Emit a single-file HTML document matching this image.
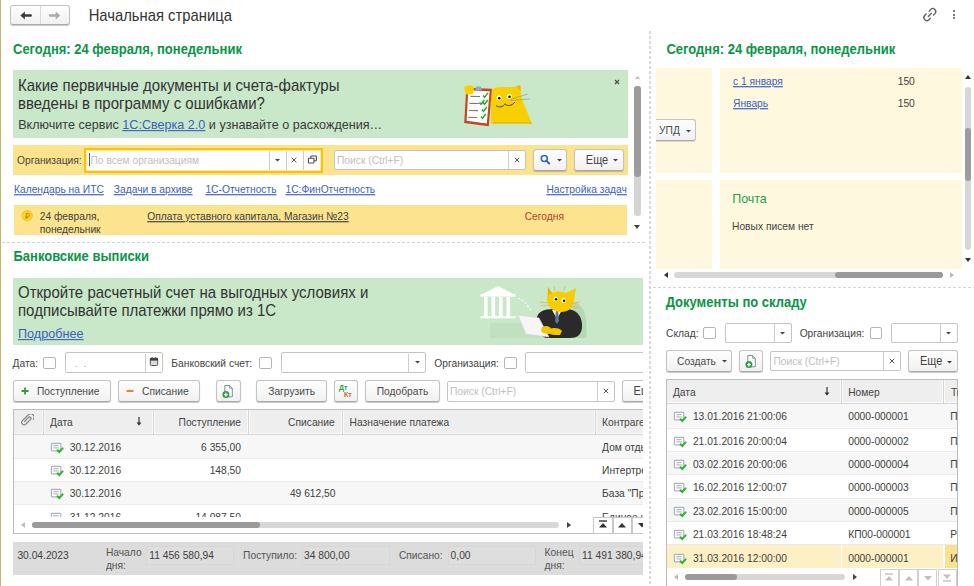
<!DOCTYPE html>
<html><head><meta charset="utf-8"><style>
html,body{margin:0;padding:0;}
body{width:974px;height:586px;overflow:hidden;position:relative;background:#fff;font-family:"Liberation Sans",sans-serif;}
.t{position:absolute;white-space:nowrap;}
.b{position:absolute;box-sizing:border-box;}
.clip{position:absolute;overflow:hidden;}
</style></head><body>
<div class="b" style="left:0.00px;top:0.00px;width:1.30px;height:586.00px;background:#c2b46a;"></div>
<div class="b" style="left:10.10px;top:4.90px;width:60.20px;height:20.60px;border:1px solid #c3c3c3;border-bottom-color:#a9a9a9;border-radius:3px;background:linear-gradient(#fefefe,#f1f1f1);box-shadow:0 1px 1px rgba(0,0,0,0.22);"></div>
<div class="b" style="left:39.90px;top:6.40px;width:1.00px;height:17.60px;background:#d9d9d9;"></div>
<svg style="position:absolute;left:0;top:0" width="70" height="30"><path d="M20.4 15.5L24.9 11.5V19.5Z" fill="#3a3a3a"/><path d="M24.5 15.5H30.6" stroke="#3a3a3a" stroke-width="2.5" stroke-linecap="round"/><path d="M60.2 15.5L55.7 11.5V19.5Z" fill="#ababab"/><path d="M56.1 15.5H50" stroke="#ababab" stroke-width="2.5" stroke-linecap="round"/></svg>
<div class="t " style="left:88.70px;top:8px;font-size:14.8px;line-height:16px;color:#333;font-weight:normal;transform:scaleY(1.08);transform-origin:0 13px;">Начальная страница</div>
<svg style="position:absolute;left:920px;top:5px" width="20" height="20"><g fill="none" stroke="#5e5e5e" stroke-width="1.35" stroke-linecap="round"><path d="M9.2 6.34L10.68 4.38A3 3 0 0 1 14.92 8.62L13.5 10.04"/><path d="M6.09 9.07L4.68 10.48A3 3 0 0 0 8.92 14.72L10.33 13.31"/><path d="M8.3 11.5L11.5 8.3"/></g></svg>
<div class="b" style="left:953.10px;top:10.35px;width:2.10px;height:2.10px;background:#505050;border-radius:50%;"></div>
<div class="b" style="left:953.10px;top:13.75px;width:2.10px;height:2.10px;background:#505050;border-radius:50%;"></div>
<div class="b" style="left:953.10px;top:17.15px;width:2.10px;height:2.10px;background:#505050;border-radius:50%;"></div>
<div class="t " style="left:13.00px;top:42px;font-size:13px;line-height:15px;color:#0b9446;font-weight:bold;transform:scaleY(1.08);transform-origin:0 12px;">Сегодня: 24 февраля, понедельник</div>
<div class="b" style="left:13.00px;top:70.00px;width:615.00px;height:68.00px;background:#c9e7c9;"></div>
<div class="t " style="left:18.00px;top:77px;font-size:15px;line-height:17px;color:#333;font-weight:normal;transform:scaleY(1.08);transform-origin:0 14px;">Какие первичные документы и счета-фактуры</div>
<div class="t " style="left:18.00px;top:95px;font-size:15px;line-height:17px;color:#333;font-weight:normal;transform:scaleY(1.08);transform-origin:0 14px;">введены в программу с ошибками?</div>
<div class="t " style="left:18.20px;top:118px;font-size:12.6px;line-height:14px;color:#3a3a3a;font-weight:normal;transform:scaleY(1.08);transform-origin:0 11px;">Включите сервис <span style="color:#3a5fbf;text-decoration:underline">1С:Сверка 2.0</span> и узнавайте о расхождения…</div>
<svg style="position:absolute;left:612.00px;top:77.00px" width="10" height="10"><path d="M3.0 3.0L7.0 7.0M7.0 3.0L3.0 7.0" stroke="#505050" stroke-width="1.3"/></svg>
<svg style="position:absolute;left:455px;top:75px" width="80" height="55" viewBox="0 0 80 55">
<path d="M36 48.6V17C37 13 41 12 48 12C55 12 60 12.5 61.5 11L65.5 10.6L65.7 17C66 22 68 27 71 34L76.8 48.6Z" fill="#f8d000"/>
<path d="M61.5 11L65.5 10.6L65.6 16.5Z" fill="#f0b400"/>
<path d="M76.8 48.6H38V47.5H76.3Z" fill="#e8a800"/>
<circle cx="44" cy="23" r="2.4" fill="#fff"/><circle cx="44.2" cy="23.2" r="1.3" fill="#111"/>
<circle cx="54.3" cy="21.5" r="2.4" fill="#fff"/><circle cx="54.5" cy="21.7" r="1.3" fill="#111"/>
<path d="M41 30.5C44 33 48 32 50.2 29C52 31.5 57 31 60 27" stroke="#333" stroke-width="0.9" fill="none"/>
<path d="M49.3 28.2L51 28.4L50.2 29.6Z" fill="#d04040"/>
<path d="M55 24.6L72.7 19M55.5 25.5L74.7 24" stroke="#8a8a8a" stroke-width="0.55"/>
<path d="M11.3 12.8L36.9 13.8L33.8 51.2L9.2 48.1Z" fill="#c4461f"/>
<path d="M13.3 15.3L34.6 16.2L31.8 48.5L11.6 45.8Z" fill="#fff"/>
<path d="M9 13C10 10 14 10 17 10.5L19 13L18 19L11 19.5Z" fill="#f8d000"/>
<path d="M21 11.5H26L26.5 15H20.5Z" fill="#8fa9d6"/>
<path d="M15.5 21.3L25 21.5M14.5 28.3L24.5 28.5M14 35.5L23 35.7M13.3 42.3L22 42.5" stroke="#7c7c7c" stroke-width="1.2"/>
<path d="M28 20.5L29.6 22.3L33 17.8M24.5 27.5L26 29.3L29.2 25M28 27.5L29.5 29.3L32.8 25M27 34.5L28.5 36.3L31.8 32M26 41.5L27.5 43.3L30.8 39" stroke="#2aa632" stroke-width="1.4" fill="none"/>
</svg>
<svg style="position:absolute;left:635px;top:75.5px" width="5" height="3"><path d="M0 3H5L2.5 0Z" fill="#bdbdbd"/></svg>
<div class="b" style="left:634.30px;top:86.40px;width:6.60px;height:129.90px;background:#d4d4d4;border-radius:3.3px;"></div>
<div class="b" style="left:634.30px;top:86.40px;width:6.60px;height:90.20px;background:#9c9c9c;border-radius:3.3px;"></div>
<svg style="position:absolute;left:634px;top:225px" width="6" height="4"><path d="M0 0H6L3 4Z" fill="#444"/></svg>
<div class="b" style="left:13.00px;top:145.40px;width:615.00px;height:29.40px;background:#fce48f;"></div>
<div class="t " style="left:17.00px;top:155px;font-size:10.25px;line-height:11px;color:#444;font-weight:normal;transform:scaleY(1.15);transform-origin:0 9px;">Организация:</div>
<div class="b" style="left:83.50px;top:147.50px;width:239.50px;height:25.50px;border:2.2px solid #f8c505;box-shadow:inset 0 0 0 1px #fde8a0;background:#fff;"></div>
<div class="b" style="left:88.60px;top:153.20px;width:1.80px;height:13.00px;background:#555;"></div>
<div class="t " style="left:90.50px;top:155px;font-size:10.25px;line-height:11px;color:#c0c0c0;font-weight:normal;transform:scaleY(1.15);transform-origin:0 9px;">По всем организациям</div>
<div class="b" style="left:268.80px;top:150.50px;width:1.00px;height:19.50px;background:#cdcdcd;"></div>
<div class="b" style="left:285.70px;top:150.50px;width:1.00px;height:19.50px;background:#cdcdcd;"></div>
<div class="b" style="left:302.60px;top:150.50px;width:1.00px;height:19.50px;background:#cdcdcd;"></div>
<svg style="position:absolute;left:275.00px;top:159.20px" width="5" height="3"><path d="M0 0H5L2.5 2.6Z" fill="#444"/></svg>
<svg style="position:absolute;left:289.20px;top:155.30px" width="10" height="10"><path d="M2.6 2.6L7.4 7.4M7.4 2.6L2.6 7.4" stroke="#555" stroke-width="1.0"/></svg>
<svg style="position:absolute;left:307px;top:155px" width="11" height="9" viewBox="0 0 11 9"><g fill="#fff" stroke="#4a4a4a" stroke-width="1.1"><rect x="3.8" y="1" width="5.6" height="4.8" rx="0.8"/><rect x="1.4" y="3.2" width="5.6" height="4.8" rx="0.8"/></g></svg>
<div class="b" style="left:334.00px;top:150.00px;width:191.60px;height:20.10px;border:1px solid #c4c4c4;border-radius:2px;background:#fff;"></div>
<div class="b" style="left:508.30px;top:151.00px;width:1.00px;height:18.20px;background:#d0d0d0;"></div>
<div class="t " style="left:337.00px;top:155px;font-size:10.25px;line-height:11px;color:#c0c0c0;font-weight:normal;transform:scaleY(1.15);transform-origin:0 9px;">Поиск (Ctrl+F)</div>
<svg style="position:absolute;left:512.00px;top:155.20px" width="10" height="10"><path d="M2.8 2.8L7.2 7.2M7.2 2.8L2.8 7.2" stroke="#555" stroke-width="1.0"/></svg>
<div class="b" style="left:533.10px;top:149.10px;width:34.40px;height:21.80px;border:1px solid #c3c3c3;border-bottom-color:#a9a9a9;border-radius:3px;background:linear-gradient(#fefefe,#f1f1f1);box-shadow:0 1px 1px rgba(0,0,0,0.22);"></div>
<svg style="position:absolute;left:538px;top:152px" width="14" height="14" viewBox="0 0 14 14"><circle cx="6.3" cy="6.4" r="3" fill="none" stroke="#2c64b6" stroke-width="1.5"/><path d="M8.4 8.6L11.3 11.6" stroke="#2c64b6" stroke-width="1.9" stroke-linecap="round"/></svg>
<svg style="position:absolute;left:557.00px;top:159.40px" width="5" height="3"><path d="M0 0H5L2.5 2.6Z" fill="#444"/></svg>
<div class="b" style="left:574.20px;top:149.10px;width:50.00px;height:21.80px;border:1px solid #c3c3c3;border-bottom-color:#a9a9a9;border-radius:3px;background:linear-gradient(#fefefe,#f1f1f1);box-shadow:0 1px 1px rgba(0,0,0,0.22);"></div>
<div class="t " style="left:585.80px;top:154px;font-size:11px;line-height:12px;color:#444;font-weight:normal;transform:scaleY(1.15);transform-origin:0 10px;">Еще</div>
<svg style="position:absolute;left:613.10px;top:159.40px" width="5" height="3"><path d="M0 0H5L2.5 2.6Z" fill="#444"/></svg>
<div class="t " style="left:14.00px;top:184px;font-size:10.25px;line-height:11px;color:#3a5fbf;font-weight:normal;transform:scaleY(1.15);transform-origin:0 9px;text-decoration:underline;">Календарь на ИТС</div>
<div class="t " style="left:113.80px;top:184px;font-size:10.25px;line-height:11px;color:#3a5fbf;font-weight:normal;transform:scaleY(1.15);transform-origin:0 9px;text-decoration:underline;">Задачи в архиве</div>
<div class="t " style="left:205.40px;top:184px;font-size:10.25px;line-height:11px;color:#3a5fbf;font-weight:normal;transform:scaleY(1.15);transform-origin:0 9px;text-decoration:underline;">1С-Отчетность</div>
<div class="t " style="left:285.50px;top:184px;font-size:10.25px;line-height:11px;color:#3a5fbf;font-weight:normal;transform:scaleY(1.15);transform-origin:0 9px;text-decoration:underline;">1С:ФинОтчетность</div>
<div class="t " style="right:347.10px;top:184px;font-size:10.25px;line-height:11px;color:#3a5fbf;font-weight:normal;transform:scaleY(1.15);transform-origin:0 9px;text-decoration:underline;">Настройка задач</div>
<div class="b" style="left:13.60px;top:205.00px;width:613.40px;height:30.40px;background:#fce48f;"></div>
<svg style="position:absolute;left:20.5px;top:210.2px" width="12" height="12" viewBox="0 0 12 12"><circle cx="6.1" cy="5.7" r="5.1" fill="#f9d72a" stroke="#ebb400" stroke-width="1" stroke-dasharray="1.2 0.8"/><path d="M5.3 2.9V8.9M5.3 3.2H7A1.55 1.55 0 0 1 7 6.3H4.1M4.1 7.6H7.3" stroke="#cf9500" stroke-width="1.05" fill="none"/></svg>
<div class="t " style="left:39.70px;top:211px;font-size:10.25px;line-height:11px;color:#404040;font-weight:normal;transform:scaleY(1.15);transform-origin:0 9px;">24 февраля,</div>
<div class="t " style="left:39.70px;top:224px;font-size:10.25px;line-height:11px;color:#404040;font-weight:normal;transform:scaleY(1.15);transform-origin:0 9px;">понедельник</div>
<div class="t " style="left:147.20px;top:211px;font-size:10.25px;line-height:11px;color:#404040;font-weight:normal;transform:scaleY(1.15);transform-origin:0 9px;text-decoration:underline;">Оплата уставного капитала, Магазин №23</div>
<div class="t " style="left:524.70px;top:211px;font-size:10.25px;line-height:11px;color:#b8402a;font-weight:normal;transform:scaleY(1.15);transform-origin:0 9px;">Сегодня</div>
<div class="b" style="left:2.00px;top:241.80px;width:644.00px;height:1.00px;background:repeating-linear-gradient(90deg,#d4d4d4 0 3px,transparent 3px 5px);"></div>
<div class="b" style="left:649.00px;top:30.70px;width:2.00px;height:555.30px;background:repeating-linear-gradient(180deg,#d8d8d8 0 3px,transparent 3px 5px);"></div>
<div class="b" style="left:653.00px;top:287.20px;width:321.00px;height:1.00px;background:repeating-linear-gradient(90deg,#d4d4d4 0 3px,transparent 3px 5px);"></div>
<div class="clip" style="left:0;top:243px;width:643.2px;height:343px;"><div style="position:absolute;left:0;top:-243px;width:974px;height:586px;">
<div class="t " style="left:13.50px;top:249px;font-size:13px;line-height:15px;color:#0b9446;font-weight:bold;transform:scaleY(1.08);transform-origin:0 12px;">Банковские выписки</div>
<div class="b" style="left:13.00px;top:278.00px;width:687.00px;height:67.10px;background:#c9e7c9;"></div>
<div class="t " style="left:18.00px;top:284px;font-size:15px;line-height:17px;color:#333;font-weight:normal;transform:scaleY(1.08);transform-origin:0 14px;">Откройте расчетный счет на выгодных условиях и</div>
<div class="t " style="left:18.00px;top:302px;font-size:15px;line-height:17px;color:#333;font-weight:normal;transform:scaleY(1.08);transform-origin:0 14px;">подписывайте платежки прямо из 1С</div>
<div class="t " style="left:18.00px;top:327px;font-size:12.65px;line-height:14px;color:#3a5fbf;font-weight:normal;transform:scaleY(1.08);transform-origin:0 11px;text-decoration:underline;">Подробнее</div>
<svg style="position:absolute;left:470px;top:278px" width="130" height="67" viewBox="0 0 130 67">
<path d="M20 45H82V60H20Z" fill="#b9dab7" opacity="0.5"/>
<path d="M104 24C114 26 118 40 116 60H96Z" fill="#b5d8b3"/>
<path d="M11 17L28 8L45 17Z" fill="#fff"/><rect x="10.5" y="16" width="35" height="2.6" fill="#fff"/>
<rect x="14" y="19" width="3.6" height="19" fill="#fff"/><rect x="21.5" y="19" width="3.6" height="19" fill="#fff"/><rect x="29" y="19" width="3.6" height="19" fill="#fff"/><rect x="36.5" y="19" width="3.6" height="19" fill="#fff"/>
<rect x="10.5" y="38" width="35" height="2.4" fill="#fff"/>
<path d="M48 20Q56 23 61 33" stroke="#fff" stroke-width="1.1" stroke-dasharray="2 2" fill="none"/>
<path d="M67 42C66 34 74 31 84 31H98C108 32 113 40 112 50C111 57 107 60 100 60H78C70 60 68 52 67 42Z" fill="#2a2a2a"/>
<path d="M82 32L87 41L92 32Z" fill="#eeeeee"/><path d="M86 33H88L89 43L87 46L85 43Z" fill="#5b7896"/>
<path d="M78 9L82 15C86 13 92 13 96 15L106 10L104 22C104 30 98 34 91 34C83 34 78 29 77 22Z" fill="#f8cd00"/>
<path d="M78 9L82 15L78 17Z" fill="#e9b400"/>
<circle cx="85.5" cy="21" r="2.2" fill="#fff"/><circle cx="86" cy="21.2" r="1.2" fill="#111"/>
<circle cx="93.5" cy="22.5" r="2.2" fill="#fff"/><circle cx="94" cy="22.7" r="1.2" fill="#111"/>
<path d="M70 24L80 25M71 28L80 27M100 26L110 24M100 28L109 30M84 8L85 13M95 8L94 13" stroke="#e2b040" stroke-width="0.7"/>
<path d="M48 37L69 40L79 59L56 56Z" fill="#f6f6f6" stroke="#d8d8d8" stroke-width="0.6"/>
<path d="M72 49C76 47 80 48 81 51L79 56C75 56 72 55 71 53Z" fill="#f5c400"/>
<path d="M79 51C84 49 90 50 92 53L90 57C85 57 80 57 79 55Z" fill="#f5c400"/>
</svg>
<div class="t " style="left:12.60px;top:358px;font-size:10.25px;line-height:11px;color:#444;font-weight:normal;transform:scaleY(1.15);transform-origin:0 9px;">Дата:</div>
<div class="b" style="left:43.10px;top:356.70px;width:12.90px;height:12.40px;border:1px solid #b5b5b5;border-radius:2px;background:#fff;"></div>
<div class="b" style="left:64.50px;top:352.40px;width:98.30px;height:20.50px;border:1px solid #c4c4c4;border-radius:2px;background:#fff;"></div>
<div class="b" style="left:144.90px;top:353.50px;width:1.00px;height:18.50px;background:#cccccc;"></div>
<div class="t " style="left:75.00px;top:358px;font-size:10.25px;line-height:11px;color:#d9a65a;font-weight:normal;transform:scaleY(1.15);transform-origin:0 9px;">. &nbsp;.</div>
<svg style="position:absolute;left:149px;top:356px" width="10" height="11" viewBox="0 0 10 11"><rect x="1.3" y="2.3" width="7.4" height="7.2" rx="1" fill="#dcdcdc" stroke="#555" stroke-width="1"/><rect x="1" y="2" width="8" height="2.6" fill="#3f3f4a"/><path d="M3.2 1V3M6.8 1V3" stroke="#555" stroke-width="1"/></svg>
<div class="t " style="left:171.30px;top:358px;font-size:10.25px;line-height:11px;color:#444;font-weight:normal;transform:scaleY(1.15);transform-origin:0 9px;">Банковский счет:</div>
<div class="b" style="left:259.30px;top:356.70px;width:12.90px;height:12.40px;border:1px solid #b5b5b5;border-radius:2px;background:#fff;"></div>
<div class="b" style="left:280.80px;top:352.40px;width:144.90px;height:20.50px;border:1px solid #c4c4c4;border-radius:2px;background:#fff;"></div>
<div class="b" style="left:408.20px;top:353.50px;width:1.00px;height:18.50px;background:#cccccc;"></div>
<svg style="position:absolute;left:414.50px;top:361.20px" width="5" height="3"><path d="M0 0H5L2.5 2.6Z" fill="#444"/></svg>
<div class="t " style="left:434.30px;top:358px;font-size:10.25px;line-height:11px;color:#444;font-weight:normal;transform:scaleY(1.15);transform-origin:0 9px;">Организация:</div>
<div class="b" style="left:503.60px;top:356.70px;width:13.20px;height:12.40px;border:1px solid #b5b5b5;border-radius:2px;background:#fff;"></div>
<div class="b" style="left:524.90px;top:352.40px;width:175.60px;height:20.50px;border:1px solid #c4c4c4;border-radius:2px;background:#fff;"></div>
<div class="b" style="left:12.90px;top:379.90px;width:97.90px;height:21.80px;border:1px solid #c3c3c3;border-bottom-color:#a9a9a9;border-radius:3px;background:linear-gradient(#fefefe,#f1f1f1);box-shadow:0 1px 1px rgba(0,0,0,0.22);"></div>
<svg style="position:absolute;left:20px;top:386px" width="10" height="10"><path d="M5 1.5V8.5M1.5 5H8.5" stroke="#2f9e3f" stroke-width="1.8"/></svg>
<div class="t " style="left:37.00px;top:386px;font-size:10.25px;line-height:11px;color:#4a4a4a;font-weight:normal;transform:scaleY(1.15);transform-origin:0 9px;">Поступление</div>
<div class="b" style="left:117.80px;top:379.90px;width:82.30px;height:21.80px;border:1px solid #c3c3c3;border-bottom-color:#a9a9a9;border-radius:3px;background:linear-gradient(#fefefe,#f1f1f1);box-shadow:0 1px 1px rgba(0,0,0,0.22);"></div>
<svg style="position:absolute;left:125px;top:386px" width="10" height="10"><path d="M1.5 5H8.5" stroke="#e6772e" stroke-width="1.8"/></svg>
<div class="t " style="left:142.00px;top:386px;font-size:10.25px;line-height:11px;color:#4a4a4a;font-weight:normal;transform:scaleY(1.15);transform-origin:0 9px;">Списание</div>
<div class="b" style="left:215.70px;top:379.90px;width:25.10px;height:21.80px;border:1px solid #c3c3c3;border-bottom-color:#a9a9a9;border-radius:3px;background:linear-gradient(#fefefe,#f1f1f1);box-shadow:0 1px 1px rgba(0,0,0,0.22);"></div>
<svg style="position:absolute;left:221.30px;top:382.80px" width="14" height="16" viewBox="0 0 14 16"><path d="M3.8 2.5H8.6L11.3 5.2V13.8H3.8Z" fill="#fff" stroke="#7f8fa8" stroke-width="1"/><path d="M8.6 2.5V5.2H11.3" fill="none" stroke="#7f8fa8" stroke-width="0.9"/><circle cx="4.9" cy="11.6" r="3.5" fill="#2f9e3f"/><path d="M4.9 9.7V13.5M3 11.6H6.8" stroke="#fff" stroke-width="1.3"/></svg>
<div class="b" style="left:256.40px;top:379.90px;width:70.40px;height:21.80px;border:1px solid #c3c3c3;border-bottom-color:#a9a9a9;border-radius:3px;background:linear-gradient(#fefefe,#f1f1f1);box-shadow:0 1px 1px rgba(0,0,0,0.22);"></div>
<div class="t " style="left:268.20px;top:386px;font-size:10.25px;line-height:11px;color:#4a4a4a;font-weight:normal;transform:scaleY(1.15);transform-origin:0 9px;">Загрузить</div>
<div class="b" style="left:333.80px;top:379.90px;width:24.20px;height:21.80px;border:1px solid #c3c3c3;border-bottom-color:#a9a9a9;border-radius:3px;background:linear-gradient(#fefefe,#f1f1f1);box-shadow:0 1px 1px rgba(0,0,0,0.22);"></div>
<svg style="position:absolute;left:338px;top:383px" width="16" height="16" viewBox="0 0 16 16"><text x="1" y="7" font-family="Liberation Sans" font-size="7" font-weight="bold" fill="#2f9e3f">Дт</text><text x="6" y="14" font-family="Liberation Sans" font-size="7" font-weight="bold" fill="#d9602a">Кт</text></svg>
<div class="b" style="left:365.20px;top:379.90px;width:74.80px;height:21.80px;border:1px solid #c3c3c3;border-bottom-color:#a9a9a9;border-radius:3px;background:linear-gradient(#fefefe,#f1f1f1);box-shadow:0 1px 1px rgba(0,0,0,0.22);"></div>
<div class="t " style="left:376.70px;top:386px;font-size:10.25px;line-height:11px;color:#4a4a4a;font-weight:normal;transform:scaleY(1.15);transform-origin:0 9px;">Подобрать</div>
<div class="b" style="left:446.90px;top:380.50px;width:168.00px;height:21.00px;border:1px solid #c4c4c4;border-radius:2px;background:#fff;"></div>
<div class="b" style="left:596.90px;top:381.50px;width:1.00px;height:19.00px;background:#cccccc;"></div>
<div class="t " style="left:450.00px;top:386px;font-size:10.25px;line-height:11px;color:#c0c0c0;font-weight:normal;transform:scaleY(1.15);transform-origin:0 9px;">Поиск (Ctrl+F)</div>
<svg style="position:absolute;left:600.80px;top:385.80px" width="10" height="10"><path d="M2.8 2.8L7.2 7.2M7.2 2.8L2.8 7.2" stroke="#555" stroke-width="1.0"/></svg>
<div class="b" style="left:621.70px;top:379.90px;width:58.80px;height:21.80px;border:1px solid #c3c3c3;border-bottom-color:#a9a9a9;border-radius:3px;background:linear-gradient(#fefefe,#f1f1f1);box-shadow:0 1px 1px rgba(0,0,0,0.22);"></div>
<div class="t " style="left:633.60px;top:385px;font-size:11px;line-height:12px;color:#444;font-weight:normal;transform:scaleY(1.15);transform-origin:0 10px;">Еще</div>
<div class="b" style="left:13.00px;top:409.00px;width:687.00px;height:125.00px;border:1px solid #bdbdbd;background:#fff;"></div>
<div class="b" style="left:14.00px;top:410.00px;width:686.00px;height:23.60px;background:#eeeeee;"></div>
<div class="b" style="left:14.00px;top:432.60px;width:686.00px;height:1.00px;background:#fafafa;"></div>
<div class="b" style="left:14.00px;top:433.60px;width:686.00px;height:1.00px;background:#d6d6d6;"></div>
<div class="b" style="left:41.70px;top:410.00px;width:1.00px;height:23.00px;background:#fafafa;"></div>
<div class="b" style="left:42.70px;top:410.00px;width:1.00px;height:23.60px;background:#d4d4d4;"></div>
<div class="b" style="left:43.70px;top:410.00px;width:1.00px;height:23.00px;background:#fafafa;"></div>
<div class="b" style="left:151.90px;top:410.00px;width:1.00px;height:23.00px;background:#fafafa;"></div>
<div class="b" style="left:152.90px;top:410.00px;width:1.00px;height:23.60px;background:#d4d4d4;"></div>
<div class="b" style="left:153.90px;top:410.00px;width:1.00px;height:23.00px;background:#fafafa;"></div>
<div class="b" style="left:246.90px;top:410.00px;width:1.00px;height:23.00px;background:#fafafa;"></div>
<div class="b" style="left:247.90px;top:410.00px;width:1.00px;height:23.60px;background:#d4d4d4;"></div>
<div class="b" style="left:248.90px;top:410.00px;width:1.00px;height:23.00px;background:#fafafa;"></div>
<div class="b" style="left:340.70px;top:410.00px;width:1.00px;height:23.00px;background:#fafafa;"></div>
<div class="b" style="left:341.70px;top:410.00px;width:1.00px;height:23.60px;background:#d4d4d4;"></div>
<div class="b" style="left:342.70px;top:410.00px;width:1.00px;height:23.00px;background:#fafafa;"></div>
<div class="b" style="left:593.70px;top:410.00px;width:1.00px;height:23.00px;background:#fafafa;"></div>
<div class="b" style="left:594.70px;top:410.00px;width:1.00px;height:23.60px;background:#d4d4d4;"></div>
<div class="b" style="left:595.70px;top:410.00px;width:1.00px;height:23.00px;background:#fafafa;"></div>
<svg style="position:absolute;left:20px;top:414px" width="14" height="14" viewBox="0 0 14 14"><g transform="rotate(45 7 7)" fill="none" stroke="#7a7a7a" stroke-width="1.1"><path d="M5.6 9.5V3.3A1.4 1.4 0 0 1 8.4 3.3V10A2.4 2.4 0 0 1 3.6 10V1.8A3.4 3.4 0 0 1 10.4 1.8"/></g></svg>
<div class="t " style="left:50.00px;top:417px;font-size:10.25px;line-height:11px;color:#444;font-weight:normal;transform:scaleY(1.15);transform-origin:0 9px;">Дата</div>
<svg style="position:absolute;left:136px;top:417px" width="6" height="9"><path d="M3 0V7.5" stroke="#333" stroke-width="1.2"/><path d="M0.5 5.5L3 8.5L5.5 5.5Z" fill="#333"/></svg>
<div class="t " style="right:733.00px;top:417px;font-size:10.25px;line-height:11px;color:#444;font-weight:normal;transform:scaleY(1.15);transform-origin:0 9px;">Поступление</div>
<div class="t " style="right:639.30px;top:417px;font-size:10.25px;line-height:11px;color:#444;font-weight:normal;transform:scaleY(1.15);transform-origin:0 9px;">Списание</div>
<div class="t " style="left:349.60px;top:417px;font-size:10.25px;line-height:11px;color:#444;font-weight:normal;transform:scaleY(1.15);transform-origin:0 9px;">Назначение платежа</div>
<div class="t " style="left:602.10px;top:417px;font-size:10.25px;line-height:11px;color:#444;font-weight:normal;transform:scaleY(1.15);transform-origin:0 9px;">Контрагент</div>
<div class="clip" style="left:14px;top:434.6px;width:690px;height:82.4px;"><div style="position:absolute;left:-14px;top:-434.6px;width:974px;height:586px;">
<div class="b" style="left:14.00px;top:434.60px;width:686.00px;height:23.10px;background:#f7f7f7;"></div>
<div class="b" style="left:14.00px;top:457.70px;width:686.00px;height:1.00px;background:#ebebeb;"></div>
<svg style="position:absolute;left:49.70px;top:440.60px" width="14" height="13" viewBox="0 0 14 13"><rect x="1.4" y="2.4" width="9.4" height="7.4" rx="0.8" fill="#fff" stroke="#aab3be" stroke-width="1.2"/><path d="M3.3 4.6H8.7M3.3 6.9H8.7" stroke="#b8bcc2" stroke-width="1.1"/><path d="M7.6 9.2L9.3 11L12.6 7.4" stroke="#2db52f" stroke-width="2" fill="none" stroke-linecap="round"/></svg>
<div class="t " style="left:69.80px;top:442px;font-size:10.25px;line-height:11px;color:#404040;font-weight:normal;transform:scaleY(1.15);transform-origin:0 9px;">30.12.2016</div>
<div class="t " style="right:733.00px;top:442px;font-size:10.25px;line-height:11px;color:#404040;font-weight:normal;transform:scaleY(1.15);transform-origin:0 9px;">6 355,00</div>
<div class="t " style="left:602.10px;top:442px;font-size:10.25px;line-height:11px;color:#404040;font-weight:normal;transform:scaleY(1.15);transform-origin:0 9px;">Дом отдыха</div>
<div class="b" style="left:14.00px;top:458.70px;width:686.00px;height:21.90px;background:#ffffff;"></div>
<div class="b" style="left:14.00px;top:480.60px;width:686.00px;height:1.00px;background:#ebebeb;"></div>
<svg style="position:absolute;left:49.70px;top:463.90px" width="14" height="13" viewBox="0 0 14 13"><rect x="1.4" y="2.4" width="9.4" height="7.4" rx="0.8" fill="#fff" stroke="#aab3be" stroke-width="1.2"/><path d="M3.3 4.6H8.7M3.3 6.9H8.7" stroke="#b8bcc2" stroke-width="1.1"/><path d="M7.6 9.2L9.3 11L12.6 7.4" stroke="#2db52f" stroke-width="2" fill="none" stroke-linecap="round"/></svg>
<div class="t " style="left:69.80px;top:465px;font-size:10.25px;line-height:11px;color:#404040;font-weight:normal;transform:scaleY(1.15);transform-origin:0 9px;">30.12.2016</div>
<div class="t " style="right:733.00px;top:465px;font-size:10.25px;line-height:11px;color:#404040;font-weight:normal;transform:scaleY(1.15);transform-origin:0 9px;">148,50</div>
<div class="t " style="left:602.10px;top:465px;font-size:10.25px;line-height:11px;color:#404040;font-weight:normal;transform:scaleY(1.15);transform-origin:0 9px;">Интертрейд</div>
<div class="b" style="left:14.00px;top:481.60px;width:686.00px;height:22.10px;background:#f7f7f7;"></div>
<div class="b" style="left:14.00px;top:503.70px;width:686.00px;height:1.00px;background:#ebebeb;"></div>
<svg style="position:absolute;left:49.70px;top:487.20px" width="14" height="13" viewBox="0 0 14 13"><rect x="1.4" y="2.4" width="9.4" height="7.4" rx="0.8" fill="#fff" stroke="#aab3be" stroke-width="1.2"/><path d="M3.3 4.6H8.7M3.3 6.9H8.7" stroke="#b8bcc2" stroke-width="1.1"/><path d="M7.6 9.2L9.3 11L12.6 7.4" stroke="#2db52f" stroke-width="2" fill="none" stroke-linecap="round"/></svg>
<div class="t " style="left:69.80px;top:488px;font-size:10.25px;line-height:11px;color:#404040;font-weight:normal;transform:scaleY(1.15);transform-origin:0 9px;">30.12.2016</div>
<div class="t " style="right:638.50px;top:488px;font-size:10.25px;line-height:11px;color:#404040;font-weight:normal;transform:scaleY(1.15);transform-origin:0 9px;">49 612,50</div>
<div class="t " style="left:602.10px;top:488px;font-size:10.25px;line-height:11px;color:#404040;font-weight:normal;transform:scaleY(1.15);transform-origin:0 9px;">База "Продукты"</div>
<div class="b" style="left:14.00px;top:504.70px;width:686.00px;height:22.80px;background:#ffffff;"></div>
<div class="b" style="left:14.00px;top:527.50px;width:686.00px;height:1.00px;background:#ebebeb;"></div>
<svg style="position:absolute;left:49.70px;top:510.60px" width="14" height="13" viewBox="0 0 14 13"><rect x="1.4" y="2.4" width="9.4" height="7.4" rx="0.8" fill="#fff" stroke="#aab3be" stroke-width="1.2"/><path d="M3.3 4.6H8.7M3.3 6.9H8.7" stroke="#b8bcc2" stroke-width="1.1"/><path d="M7.6 9.2L9.3 11L12.6 7.4" stroke="#2db52f" stroke-width="2" fill="none" stroke-linecap="round"/></svg>
<div class="t " style="left:69.80px;top:512px;font-size:10.25px;line-height:11px;color:#404040;font-weight:normal;transform:scaleY(1.15);transform-origin:0 9px;">31.12.2016</div>
<div class="t " style="right:733.00px;top:512px;font-size:10.25px;line-height:11px;color:#404040;font-weight:normal;transform:scaleY(1.15);transform-origin:0 9px;">14 087,50</div>
<div class="t " style="left:602.10px;top:512px;font-size:10.25px;line-height:11px;color:#404040;font-weight:normal;transform:scaleY(1.15);transform-origin:0 9px;">Единое казначейство</div>
</div></div>
<svg style="position:absolute;left:20.80px;top:521.80px" width="4" height="6"><path d="M4 0V6L0 3Z" fill="#bbb"/></svg>
<svg style="position:absolute;left:566.70px;top:521.80px" width="4" height="6"><path d="M0 0V6L4 3Z" fill="#444"/></svg>
<div class="b" style="left:32.30px;top:521.80px;width:526.60px;height:6.00px;background:#d7d7d7;border-radius:3.0px;"></div>
<div class="b" style="left:32.30px;top:521.80px;width:227.90px;height:6.00px;background:#9a9a9a;border-radius:3.0px;"></div>
<div class="b" style="left:593.40px;top:516.50px;width:19.20px;height:17.10px;border:1px solid #c8c8c8;background:#fff;"></div>
<div class="b" style="left:612.60px;top:516.50px;width:19.80px;height:17.10px;border:1px solid #c8c8c8;background:#fff;"></div>
<div class="b" style="left:632.40px;top:516.50px;width:19.60px;height:17.10px;border:1px solid #c8c8c8;background:#fff;"></div>
<svg style="position:absolute;left:598px;top:520px" width="10" height="9"><path d="M1 1H9" stroke="#333" stroke-width="1.4"/><path d="M1 7.5L5 3L9 7.5Z" fill="#333"/></svg>
<svg style="position:absolute;left:617px;top:521px" width="10" height="8"><path d="M1 6.5L5 2L9 6.5Z" fill="#333"/></svg>
<svg style="position:absolute;left:637px;top:521px" width="10" height="8"><path d="M1 2L5 6.5L9 2Z" fill="#333"/></svg>
<div class="b" style="left:13.00px;top:541.80px;width:687.00px;height:33.20px;background:#dcdcdc;"></div>
<div class="t " style="left:17.40px;top:550px;font-size:10.25px;line-height:11px;color:#404040;font-weight:normal;transform:scaleY(1.15);transform-origin:0 9px;">30.04.2023</div>
<div class="t " style="left:105.90px;top:547px;font-size:10.25px;line-height:11px;color:#555;font-weight:normal;transform:scaleY(1.15);transform-origin:0 9px;">Начало</div>
<div class="t " style="left:105.90px;top:560px;font-size:10.25px;line-height:11px;color:#555;font-weight:normal;transform:scaleY(1.15);transform-origin:0 9px;">дня:</div>
<div class="b" style="left:145.50px;top:545.90px;width:88.80px;height:19.10px;border:1px solid #d6d6d6;border-radius:2px;background:#dedede;"></div>
<div class="t " style="left:149.20px;top:550px;font-size:10.25px;line-height:11px;color:#404040;font-weight:normal;transform:scaleY(1.15);transform-origin:0 9px;">11 456 580,94</div>
<div class="t " style="left:243.10px;top:550px;font-size:10.25px;line-height:11px;color:#555;font-weight:normal;transform:scaleY(1.15);transform-origin:0 9px;">Поступило:</div>
<div class="b" style="left:301.50px;top:545.90px;width:88.70px;height:19.10px;border:1px solid #d6d6d6;border-radius:2px;background:#dedede;"></div>
<div class="t " style="left:304.00px;top:550px;font-size:10.25px;line-height:11px;color:#404040;font-weight:normal;transform:scaleY(1.15);transform-origin:0 9px;">34 800,00</div>
<div class="t " style="left:398.90px;top:550px;font-size:10.25px;line-height:11px;color:#555;font-weight:normal;transform:scaleY(1.15);transform-origin:0 9px;">Списано:</div>
<div class="b" style="left:447.50px;top:545.90px;width:88.30px;height:19.10px;border:1px solid #d6d6d6;border-radius:2px;background:#dedede;"></div>
<div class="t " style="left:450.60px;top:550px;font-size:10.25px;line-height:11px;color:#404040;font-weight:normal;transform:scaleY(1.15);transform-origin:0 9px;">0,00</div>
<div class="t " style="left:544.60px;top:547px;font-size:10.25px;line-height:11px;color:#555;font-weight:normal;transform:scaleY(1.15);transform-origin:0 9px;">Конец</div>
<div class="t " style="left:544.60px;top:560px;font-size:10.25px;line-height:11px;color:#555;font-weight:normal;transform:scaleY(1.15);transform-origin:0 9px;">дня:</div>
<div class="b" style="left:578.60px;top:545.90px;width:91.40px;height:19.10px;border:1px solid #d6d6d6;border-radius:2px;background:#dedede;"></div>
<div class="t " style="left:582.00px;top:550px;font-size:10.25px;line-height:11px;color:#404040;font-weight:normal;transform:scaleY(1.15);transform-origin:0 9px;">11 491 380,94</div>
</div></div>
<div class="t " style="left:666.40px;top:42px;font-size:13px;line-height:15px;color:#0b9446;font-weight:bold;transform:scaleY(1.08);transform-origin:0 12px;">Сегодня: 24 февраля, понедельник</div>
<div class="b" style="left:656.10px;top:67.80px;width:55.80px;height:104.80px;background:#fef8df;"></div>
<div class="b" style="left:720.10px;top:67.80px;width:241.90px;height:104.80px;background:#fef8df;"></div>
<div class="b" style="left:656.10px;top:179.80px;width:55.80px;height:89.60px;background:#fef8df;"></div>
<div class="b" style="left:720.10px;top:179.80px;width:241.90px;height:89.60px;background:#fef8df;"></div>
<div class="t " style="left:733.00px;top:76px;font-size:10.25px;line-height:11px;color:#3a5fbf;font-weight:normal;transform:scaleY(1.15);transform-origin:0 9px;text-decoration:underline;">с 1 января</div>
<div class="t " style="left:897.70px;top:76px;font-size:10.25px;line-height:11px;color:#404040;font-weight:normal;transform:scaleY(1.15);transform-origin:0 9px;">150</div>
<div class="t " style="left:733.00px;top:98px;font-size:10.25px;line-height:11px;color:#3a5fbf;font-weight:normal;transform:scaleY(1.15);transform-origin:0 9px;text-decoration:underline;">Январь</div>
<div class="t " style="left:897.70px;top:98px;font-size:10.25px;line-height:11px;color:#404040;font-weight:normal;transform:scaleY(1.15);transform-origin:0 9px;">150</div>
<div class="clip" style="left:656.1px;top:110px;width:60px;height:40px;">
<div class="b" style="left:-30px;top:9.2px;width:70px;height:21.9px;border:1px solid #c3c3c3;border-bottom-color:#a9a9a9;border-radius:3px;background:linear-gradient(#fefefe,#f1f1f1);box-shadow:0 1px 0 rgba(0,0,0,0.12);"></div>
</div>
<div class="t " style="left:659.00px;top:125px;font-size:10.25px;line-height:11px;color:#4a4a4a;font-weight:normal;transform:scaleY(1.15);transform-origin:0 9px;">УПД</div>
<svg style="position:absolute;left:686.20px;top:130.20px" width="5" height="3"><path d="M0 0H5L2.5 2.6Z" fill="#444"/></svg>
<div class="t " style="left:732.30px;top:192px;font-size:12.4px;line-height:14px;color:#1aa04f;font-weight:normal;transform:scaleY(1.08);transform-origin:0 11px;">Почта</div>
<div class="t " style="left:732.00px;top:221px;font-size:10.25px;line-height:11px;color:#444;font-weight:normal;transform:scaleY(1.15);transform-origin:0 9px;">Новых писем нет</div>
<svg style="position:absolute;left:965px;top:75px" width="6" height="4"><path d="M0 4H6L3 0Z" fill="#333"/></svg>
<div class="b" style="left:964.70px;top:86.70px;width:6.20px;height:163.60px;background:#d6d6d6;border-radius:3px;"></div>
<div class="b" style="left:964.70px;top:127.50px;width:6.20px;height:53.50px;background:#9c9c9c;border-radius:3px;"></div>
<svg style="position:absolute;left:965px;top:258px" width="6" height="4"><path d="M0 0H6L3 4Z" fill="#333"/></svg>
<svg style="position:absolute;left:663.50px;top:272.20px" width="4" height="6"><path d="M4 0V6L0 3Z" fill="#333"/></svg>
<svg style="position:absolute;left:950.30px;top:272.20px" width="4" height="6"><path d="M0 0V6L4 3Z" fill="#bbb"/></svg>
<div class="b" style="left:674.40px;top:272.20px;width:268.60px;height:6.00px;background:#d7d7d7;border-radius:3.0px;"></div>
<div class="b" style="left:835.30px;top:272.20px;width:107.70px;height:6.00px;background:#9a9a9a;border-radius:3.0px;"></div>
<div class="t " style="left:665.70px;top:295px;font-size:13px;line-height:15px;color:#0b9446;font-weight:bold;transform:scaleY(1.08);transform-origin:0 12px;">Документы по складу</div>
<div class="t " style="left:666.00px;top:328px;font-size:10.25px;line-height:11px;color:#444;font-weight:normal;transform:scaleY(1.15);transform-origin:0 9px;">Склад:</div>
<div class="b" style="left:703.30px;top:327.00px;width:12.60px;height:12.30px;border:1px solid #b5b5b5;border-radius:2px;background:#fff;"></div>
<div class="b" style="left:724.50px;top:322.80px;width:67.00px;height:20.00px;border:1px solid #c4c4c4;border-radius:2px;background:#fff;"></div>
<div class="b" style="left:773.90px;top:324.00px;width:1.00px;height:17.80px;background:#cccccc;"></div>
<svg style="position:absolute;left:780.20px;top:331.50px" width="5" height="3"><path d="M0 0H5L2.5 2.6Z" fill="#444"/></svg>
<div class="t " style="right:109.70px;top:328px;font-size:10.25px;line-height:11px;color:#444;font-weight:normal;transform:scaleY(1.15);transform-origin:0 9px;">Организация:</div>
<div class="b" style="left:869.50px;top:327.00px;width:12.80px;height:12.30px;border:1px solid #b5b5b5;border-radius:2px;background:#fff;"></div>
<div class="b" style="left:890.90px;top:322.90px;width:66.70px;height:20.10px;border:1px solid #c4c4c4;border-radius:2px;background:#fff;"></div>
<div class="b" style="left:940.00px;top:324.00px;width:1.00px;height:18.00px;background:#cccccc;"></div>
<svg style="position:absolute;left:946.30px;top:331.50px" width="5" height="3"><path d="M0 0H5L2.5 2.6Z" fill="#444"/></svg>
<div class="b" style="left:665.70px;top:350.20px;width:66.30px;height:21.40px;border:1px solid #c3c3c3;border-bottom-color:#a9a9a9;border-radius:3px;background:linear-gradient(#fefefe,#f1f1f1);box-shadow:0 1px 1px rgba(0,0,0,0.22);"></div>
<div class="t " style="left:677.00px;top:356px;font-size:10.25px;line-height:11px;color:#4a4a4a;font-weight:normal;transform:scaleY(1.15);transform-origin:0 9px;">Создать</div>
<svg style="position:absolute;left:721.50px;top:360.20px" width="5" height="3"><path d="M0 0H5L2.5 2.6Z" fill="#444"/></svg>
<div class="b" style="left:738.90px;top:350.20px;width:24.20px;height:21.40px;border:1px solid #c3c3c3;border-bottom-color:#a9a9a9;border-radius:3px;background:linear-gradient(#fefefe,#f1f1f1);box-shadow:0 1px 1px rgba(0,0,0,0.22);"></div>
<svg style="position:absolute;left:744.00px;top:353.00px" width="14" height="16" viewBox="0 0 14 16"><path d="M3.8 2.5H8.6L11.3 5.2V13.8H3.8Z" fill="#fff" stroke="#7f8fa8" stroke-width="1"/><path d="M8.6 2.5V5.2H11.3" fill="none" stroke="#7f8fa8" stroke-width="0.9"/><circle cx="4.9" cy="11.6" r="3.5" fill="#2f9e3f"/><path d="M4.9 9.7V13.5M3 11.6H6.8" stroke="#fff" stroke-width="1.3"/></svg>
<div class="b" style="left:769.90px;top:350.90px;width:131.50px;height:20.30px;border:1px solid #c4c4c4;border-radius:2px;background:#fff;"></div>
<div class="b" style="left:883.40px;top:352.00px;width:1.00px;height:18.20px;background:#cccccc;"></div>
<div class="t " style="left:773.50px;top:356px;font-size:10.25px;line-height:11px;color:#c0c0c0;font-weight:normal;transform:scaleY(1.15);transform-origin:0 9px;">Поиск (Ctrl+F)</div>
<svg style="position:absolute;left:887.40px;top:356.00px" width="10" height="10"><path d="M2.8 2.8L7.2 7.2M7.2 2.8L2.8 7.2" stroke="#555" stroke-width="1.0"/></svg>
<div class="b" style="left:908.40px;top:350.20px;width:49.20px;height:21.90px;border:1px solid #c3c3c3;border-bottom-color:#a9a9a9;border-radius:3px;background:linear-gradient(#fefefe,#f1f1f1);box-shadow:0 1px 1px rgba(0,0,0,0.22);"></div>
<div class="t " style="left:920.00px;top:355px;font-size:11px;line-height:12px;color:#444;font-weight:normal;transform:scaleY(1.15);transform-origin:0 10px;">Еще</div>
<svg style="position:absolute;left:947.40px;top:360.60px" width="5" height="3"><path d="M0 0H5L2.5 2.6Z" fill="#444"/></svg>
<div class="clip" style="left:650px;top:375px;width:308px;height:211px;"><div style="position:absolute;left:-650px;top:-375px;width:974px;height:586px;">
<div class="b" style="left:666.00px;top:379.00px;width:334.00px;height:321.00px;border:1px solid #bdbdbd;background:#fff;"></div>
<div class="b" style="left:667.00px;top:380.00px;width:290.00px;height:23.20px;background:#eeeeee;"></div>
<div class="b" style="left:667.00px;top:402.20px;width:290.00px;height:1.00px;background:#fafafa;"></div>
<div class="b" style="left:667.00px;top:403.20px;width:290.00px;height:1.00px;background:#d6d6d6;"></div>
<div class="b" style="left:840.10px;top:380.00px;width:1.00px;height:22.60px;background:#fafafa;"></div>
<div class="b" style="left:841.10px;top:380.00px;width:1.00px;height:23.20px;background:#d4d4d4;"></div>
<div class="b" style="left:842.10px;top:380.00px;width:1.00px;height:22.60px;background:#fafafa;"></div>
<div class="b" style="left:941.90px;top:380.00px;width:1.00px;height:22.60px;background:#fafafa;"></div>
<div class="b" style="left:942.90px;top:380.00px;width:1.00px;height:23.20px;background:#d4d4d4;"></div>
<div class="b" style="left:943.90px;top:380.00px;width:1.00px;height:22.60px;background:#fafafa;"></div>
<div class="b" style="left:957.00px;top:379.00px;width:1.00px;height:321.00px;background:#bdbdbd;"></div>
<div class="t " style="left:672.90px;top:387px;font-size:10.25px;line-height:11px;color:#444;font-weight:normal;transform:scaleY(1.15);transform-origin:0 9px;">Дата</div>
<svg style="position:absolute;left:824px;top:387px" width="6" height="9"><path d="M3 0V7.5" stroke="#333" stroke-width="1.2"/><path d="M0.5 5.5L3 8.5L5.5 5.5Z" fill="#333"/></svg>
<div class="t " style="left:848.20px;top:387px;font-size:10.25px;line-height:11px;color:#444;font-weight:normal;transform:scaleY(1.15);transform-origin:0 9px;">Номер</div>
<div class="t " style="left:950.90px;top:387px;font-size:10.25px;line-height:11px;color:#444;font-weight:normal;transform:scaleY(1.15);transform-origin:0 9px;">Тип</div>
<div class="b" style="left:667.00px;top:404.20px;width:290.00px;height:23.50px;background:#f7f7f7;"></div>
<div class="b" style="left:667.00px;top:427.70px;width:290.00px;height:1.00px;background:#ebebeb;"></div>
<svg style="position:absolute;left:673.00px;top:410.40px" width="14" height="13" viewBox="0 0 14 13"><rect x="1.4" y="2.4" width="9.4" height="7.4" rx="0.8" fill="#fff" stroke="#aab3be" stroke-width="1.2"/><path d="M3.3 4.6H8.7M3.3 6.9H8.7" stroke="#b8bcc2" stroke-width="1.1"/><path d="M7.6 9.2L9.3 11L12.6 7.4" stroke="#2db52f" stroke-width="2" fill="none" stroke-linecap="round"/></svg>
<div class="t " style="left:692.90px;top:411px;font-size:10.25px;line-height:11px;color:#404040;font-weight:normal;transform:scaleY(1.15);transform-origin:0 9px;">13.01.2016 21:00:06</div>
<div class="t " style="left:848.20px;top:411px;font-size:10.25px;line-height:11px;color:#404040;font-weight:normal;transform:scaleY(1.15);transform-origin:0 9px;">0000-000001</div>
<div class="t " style="left:950.30px;top:411px;font-size:10.25px;line-height:11px;color:#404040;font-weight:normal;transform:scaleY(1.15);transform-origin:0 9px;">П</div>
<div class="b" style="left:667.00px;top:428.70px;width:290.00px;height:22.00px;background:#ffffff;"></div>
<div class="b" style="left:667.00px;top:450.70px;width:290.00px;height:1.00px;background:#ebebeb;"></div>
<svg style="position:absolute;left:673.00px;top:434.90px" width="14" height="13" viewBox="0 0 14 13"><rect x="1.4" y="2.4" width="9.4" height="7.4" rx="0.8" fill="#fff" stroke="#aab3be" stroke-width="1.2"/><path d="M3.3 4.6H8.7M3.3 6.9H8.7" stroke="#b8bcc2" stroke-width="1.1"/><path d="M7.6 9.2L9.3 11L12.6 7.4" stroke="#2db52f" stroke-width="2" fill="none" stroke-linecap="round"/></svg>
<div class="t " style="left:692.90px;top:436px;font-size:10.25px;line-height:11px;color:#404040;font-weight:normal;transform:scaleY(1.15);transform-origin:0 9px;">21.01.2016 20:00:04</div>
<div class="t " style="left:848.20px;top:436px;font-size:10.25px;line-height:11px;color:#404040;font-weight:normal;transform:scaleY(1.15);transform-origin:0 9px;">0000-000002</div>
<div class="t " style="left:950.30px;top:436px;font-size:10.25px;line-height:11px;color:#404040;font-weight:normal;transform:scaleY(1.15);transform-origin:0 9px;">П</div>
<div class="b" style="left:667.00px;top:451.70px;width:290.00px;height:22.20px;background:#f7f7f7;"></div>
<div class="b" style="left:667.00px;top:473.90px;width:290.00px;height:1.00px;background:#ebebeb;"></div>
<svg style="position:absolute;left:673.00px;top:457.90px" width="14" height="13" viewBox="0 0 14 13"><rect x="1.4" y="2.4" width="9.4" height="7.4" rx="0.8" fill="#fff" stroke="#aab3be" stroke-width="1.2"/><path d="M3.3 4.6H8.7M3.3 6.9H8.7" stroke="#b8bcc2" stroke-width="1.1"/><path d="M7.6 9.2L9.3 11L12.6 7.4" stroke="#2db52f" stroke-width="2" fill="none" stroke-linecap="round"/></svg>
<div class="t " style="left:692.90px;top:459px;font-size:10.25px;line-height:11px;color:#404040;font-weight:normal;transform:scaleY(1.15);transform-origin:0 9px;">03.02.2016 20:00:06</div>
<div class="t " style="left:848.20px;top:459px;font-size:10.25px;line-height:11px;color:#404040;font-weight:normal;transform:scaleY(1.15);transform-origin:0 9px;">0000-000004</div>
<div class="t " style="left:950.30px;top:459px;font-size:10.25px;line-height:11px;color:#404040;font-weight:normal;transform:scaleY(1.15);transform-origin:0 9px;">П</div>
<div class="b" style="left:667.00px;top:474.90px;width:290.00px;height:22.90px;background:#ffffff;"></div>
<div class="b" style="left:667.00px;top:497.80px;width:290.00px;height:1.00px;background:#ebebeb;"></div>
<svg style="position:absolute;left:673.00px;top:481.10px" width="14" height="13" viewBox="0 0 14 13"><rect x="1.4" y="2.4" width="9.4" height="7.4" rx="0.8" fill="#fff" stroke="#aab3be" stroke-width="1.2"/><path d="M3.3 4.6H8.7M3.3 6.9H8.7" stroke="#b8bcc2" stroke-width="1.1"/><path d="M7.6 9.2L9.3 11L12.6 7.4" stroke="#2db52f" stroke-width="2" fill="none" stroke-linecap="round"/></svg>
<div class="t " style="left:692.90px;top:482px;font-size:10.25px;line-height:11px;color:#404040;font-weight:normal;transform:scaleY(1.15);transform-origin:0 9px;">16.02.2016 12:00:07</div>
<div class="t " style="left:848.20px;top:482px;font-size:10.25px;line-height:11px;color:#404040;font-weight:normal;transform:scaleY(1.15);transform-origin:0 9px;">0000-000003</div>
<div class="t " style="left:950.30px;top:482px;font-size:10.25px;line-height:11px;color:#404040;font-weight:normal;transform:scaleY(1.15);transform-origin:0 9px;">П</div>
<div class="b" style="left:667.00px;top:498.80px;width:290.00px;height:21.80px;background:#f7f7f7;"></div>
<div class="b" style="left:667.00px;top:520.60px;width:290.00px;height:1.00px;background:#ebebeb;"></div>
<svg style="position:absolute;left:673.00px;top:505.00px" width="14" height="13" viewBox="0 0 14 13"><rect x="1.4" y="2.4" width="9.4" height="7.4" rx="0.8" fill="#fff" stroke="#aab3be" stroke-width="1.2"/><path d="M3.3 4.6H8.7M3.3 6.9H8.7" stroke="#b8bcc2" stroke-width="1.1"/><path d="M7.6 9.2L9.3 11L12.6 7.4" stroke="#2db52f" stroke-width="2" fill="none" stroke-linecap="round"/></svg>
<div class="t " style="left:692.90px;top:506px;font-size:10.25px;line-height:11px;color:#404040;font-weight:normal;transform:scaleY(1.15);transform-origin:0 9px;">23.02.2016 15:00:00</div>
<div class="t " style="left:848.20px;top:506px;font-size:10.25px;line-height:11px;color:#404040;font-weight:normal;transform:scaleY(1.15);transform-origin:0 9px;">0000-000005</div>
<div class="t " style="left:950.30px;top:506px;font-size:10.25px;line-height:11px;color:#404040;font-weight:normal;transform:scaleY(1.15);transform-origin:0 9px;">П</div>
<div class="b" style="left:667.00px;top:521.60px;width:290.00px;height:22.80px;background:#ffffff;"></div>
<div class="b" style="left:667.00px;top:544.40px;width:290.00px;height:1.00px;background:#ebebeb;"></div>
<svg style="position:absolute;left:673.00px;top:527.80px" width="14" height="13" viewBox="0 0 14 13"><rect x="1.4" y="2.4" width="9.4" height="7.4" rx="0.8" fill="#fff" stroke="#aab3be" stroke-width="1.2"/><path d="M3.3 4.6H8.7M3.3 6.9H8.7" stroke="#b8bcc2" stroke-width="1.1"/><path d="M7.6 9.2L9.3 11L12.6 7.4" stroke="#2db52f" stroke-width="2" fill="none" stroke-linecap="round"/></svg>
<div class="t " style="left:692.90px;top:529px;font-size:10.25px;line-height:11px;color:#404040;font-weight:normal;transform:scaleY(1.15);transform-origin:0 9px;">21.03.2016 18:48:24</div>
<div class="t " style="left:848.20px;top:529px;font-size:10.25px;line-height:11px;color:#404040;font-weight:normal;transform:scaleY(1.15);transform-origin:0 9px;">КП00-000001</div>
<div class="t " style="left:950.30px;top:529px;font-size:10.25px;line-height:11px;color:#404040;font-weight:normal;transform:scaleY(1.15);transform-origin:0 9px;">Р</div>
<div class="b" style="left:667.00px;top:545.40px;width:174.10px;height:22.50px;background:#fdf0c4;"></div>
<div class="b" style="left:842.00px;top:545.40px;width:101.00px;height:22.50px;background:#fdf0c4;"></div>
<div class="b" style="left:944.60px;top:545.40px;width:12.40px;height:22.50px;background:#fbe08d;"></div>
<svg style="position:absolute;left:673.00px;top:551.60px" width="14" height="13" viewBox="0 0 14 13"><rect x="1.4" y="2.4" width="9.4" height="7.4" rx="0.8" fill="#fff" stroke="#aab3be" stroke-width="1.2"/><path d="M3.3 4.6H8.7M3.3 6.9H8.7" stroke="#b8bcc2" stroke-width="1.1"/><path d="M7.6 9.2L9.3 11L12.6 7.4" stroke="#2db52f" stroke-width="2" fill="none" stroke-linecap="round"/></svg>
<div class="t " style="left:692.90px;top:553px;font-size:10.25px;line-height:11px;color:#404040;font-weight:normal;transform:scaleY(1.15);transform-origin:0 9px;">31.03.2016 12:00:00</div>
<div class="t " style="left:848.20px;top:553px;font-size:10.25px;line-height:11px;color:#404040;font-weight:normal;transform:scaleY(1.15);transform-origin:0 9px;">0000-000001</div>
<div class="t " style="left:950.30px;top:553px;font-size:10.25px;line-height:11px;color:#404040;font-weight:normal;transform:scaleY(1.15);transform-origin:0 9px;">И</div>
<svg style="position:absolute;left:673.50px;top:574.00px" width="4" height="6"><path d="M4 0V6L0 3Z" fill="#bbb"/></svg>
<svg style="position:absolute;left:853.00px;top:574.00px" width="4" height="6"><path d="M0 0V6L4 3Z" fill="#444"/></svg>
<div class="b" style="left:685.00px;top:574.00px;width:160.20px;height:6.00px;background:#d7d7d7;border-radius:3.0px;"></div>
<div class="b" style="left:685.00px;top:574.00px;width:52.10px;height:6.00px;background:#9a9a9a;border-radius:3.0px;"></div>
<div class="b" style="left:879.70px;top:569.30px;width:19.40px;height:30.70px;border:1px solid #d0d0d0;background:#fff;"></div>
<div class="b" style="left:899.10px;top:569.30px;width:19.20px;height:30.70px;border:1px solid #d0d0d0;background:#fff;"></div>
<div class="b" style="left:918.30px;top:569.30px;width:19.20px;height:30.70px;border:1px solid #d0d0d0;background:#fff;"></div>
<div class="b" style="left:937.50px;top:569.30px;width:19.50px;height:30.70px;border:1px solid #d0d0d0;background:#fff;"></div>
<svg style="position:absolute;left:884px;top:573px" width="10" height="9"><path d="M1 1H9" stroke="#c0c0c0" stroke-width="1.4"/><path d="M1 7.5L5 3L9 7.5Z" fill="#c0c0c0"/></svg>
<svg style="position:absolute;left:903.5px;top:574px" width="10" height="8"><path d="M1 6.5L5 2L9 6.5Z" fill="#c0c0c0"/></svg>
<svg style="position:absolute;left:923px;top:574px" width="10" height="8"><path d="M1 2L5 6.5L9 2Z" fill="#c0c0c0"/></svg>
<svg style="position:absolute;left:942px;top:573px" width="10" height="9"><path d="M1 8H9" stroke="#c0c0c0" stroke-width="1.4"/><path d="M1 1.5L5 6L9 1.5Z" fill="#c0c0c0"/></svg>
</div></div>
</body></html>
